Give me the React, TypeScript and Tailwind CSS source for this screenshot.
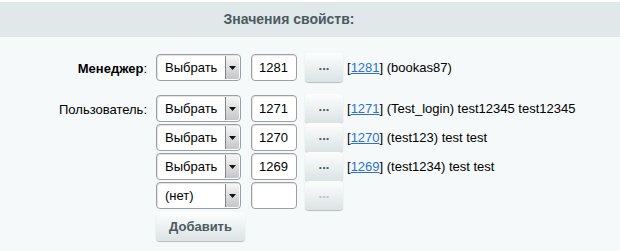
const font = "font-['Liberation_Sans',Arial,sans-serif]";

function Select({ label }: { label: string }) {
  return (
    <div className="flex h-[27px] w-[85px] overflow-hidden rounded-[4px] border border-[#9a9fa3] bg-white shadow-[inset_1px_1px_1px_rgba(0,0,0,0.12)]">
      <div className="flex flex-1 items-center pl-[8px] text-[13px] text-black">{label}</div>
      <div className="my-[1px] mr-[1px] flex w-[14px] items-center justify-center rounded-r-[2px] border-l border-[#7f8588] bg-gradient-to-b from-[#f6f6f6] to-[#c4c6c7]">
        <svg width="7" height="4" viewBox="0 0 7 4">
          <path d="M0 0h7L3.5 4z" fill="#111" />
        </svg>
      </div>
    </div>
  );
}

function Input({ value }: { value: string }) {
  return (
    <div className="flex h-[27px] w-[46px] items-center rounded-[4px] border border-[#9a9fa3] bg-white pl-[7px] text-[13px] text-black shadow-[inset_1px_1px_1px_rgba(0,0,0,0.1)]">
      {value}
    </div>
  );
}

function Dots({ disabled }: { disabled?: boolean }) {
  return (
    <div
      className={
        'flex h-[29px] w-[38px] items-center justify-center rounded-[4px] bg-gradient-to-b from-[#fdfefe] to-[#dbe3e5] pb-[3px] text-[13px] font-bold shadow-[0_1px_1px_rgba(0,0,0,0.25)] ' +
        (disabled ? 'text-[#b8c0c3]' : 'text-[#4b5a5e]')
      }
    >
      ...
    </div>
  );
}

function Row({ sel, id, text, disabled }: { sel: string; id: string; text?: string; disabled?: boolean }) {
  return (
    <div className="flex h-[27px] items-center">
      <Select label={sel} />
      <div className="ml-[10px]">
        <Input value={id} />
      </div>
      <div className="ml-[8px]">
        <Dots disabled={disabled} />
      </div>
      {text && (
        <div className="ml-[4px] text-[13px] text-black">
          [<span className="text-[#2a72d4] underline">{id}</span>] {text}
        </div>
      )}
    </div>
  );
}

export default function App() {
  return (
    <div className={`${font} h-[251px] w-[620px] border-t-2 border-white bg-[#f5f9f9]`}>
      <div className="flex h-[35px] items-center justify-center bg-[#e0e8ea] pr-[42px] text-[14px] font-bold text-[#4b5a5e]">
        Значения свойств:
      </div>

      <div className="pt-[17px]">
        <div className="flex">
          <div className="w-[147px] pt-[5px] text-right text-[13px] text-black">
            <span className="font-bold">Менеджер</span>:
          </div>
          <div className="ml-[9px]">
            <Row sel="Выбрать" id="1281" text="(bookas87)" />
          </div>
        </div>

        <div className="mt-[14px] flex">
          <div className="w-[147px] pt-[5px] text-right text-[13px] text-black">Пользователь:</div>
          <div className="ml-[9px] flex flex-col gap-[2px]">
            <Row sel="Выбрать" id="1271" text="(Test_login) test12345 test12345" />
            <Row sel="Выбрать" id="1270" text="(test123) test test" />
            <Row sel="Выбрать" id="1269" text="(test1234) test test" />
            <Row sel="(нет)" id="" disabled />
            <div className="mt-[1px] flex h-[29px] w-[89px] items-center justify-center rounded-[4px] bg-gradient-to-b from-[#fdfefe] to-[#dbe3e5] text-[13px] font-bold text-[#4b5a5e] shadow-[0_1px_1px_rgba(0,0,0,0.25)]">
              Добавить
            </div>
          </div>
        </div>
      </div>
    </div>
  );
}
